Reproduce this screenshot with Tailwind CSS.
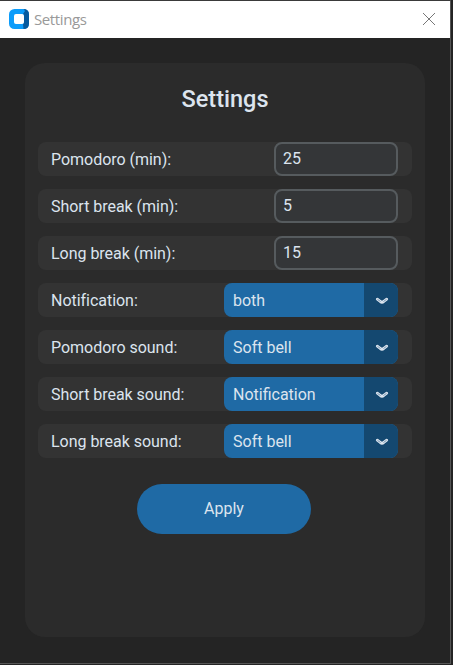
<!DOCTYPE html>
<html lang="en">
<head>
<meta charset="utf-8">
<title>Settings</title>
<script src="https://cdn.jsdelivr.net/npm/@tailwindcss/browser@4"></script>
</head>
<body class="h-[665px] w-[453px] overflow-hidden bg-[#242424] font-[Roboto,sans-serif] text-[16px] text-[#dce4ee]">
<div class="flex h-[664px] w-[451px] flex-col border-t border-r border-b border-t-[#3a3a3a] border-r-[#555] border-b-[#555] bg-[#242424]">
  <header class="flex h-[37px] shrink-0 items-center bg-white pr-[15px] pl-[9px]">
    <svg class="mb-px h-5 w-5" viewBox="0 0 20 20">
      <rect width="20" height="20" rx="5.5" fill="#0c9cfa"/>
      <path d="M14.5 0Q20 0 20 5.5V14.5Q20 20 14.5 20L14 15L15 13V7L14 5L16 2Z" fill="#075a9e"/>
      <rect x="5" y="5" width="10" height="10" rx="2" fill="#fff"/>
    </svg>
    <h1 class="ml-[5px] font-['Open_Sans',sans-serif] text-[15px] tracking-[-0.4px] text-[#999]">Settings</h1>
    <svg class="mb-px ml-auto h-3 w-3" viewBox="0 0 12 12" fill="none" stroke="#777" stroke-width="1"><path d="M0 0L12 12M12 0L0 12"/></svg>
  </header>
  <main class="mt-[25px] ml-[25px] flex h-[574px] w-[400px] flex-col items-center rounded-[20px] bg-[#2b2b2b] px-[13px]">
    <h2 class="mt-[21px] h-[30px] text-[23.5px] leading-[30px] font-medium">Settings</h2>
    <div class="mt-[28px] flex w-full flex-col gap-[13px]">
      <div class="flex h-[34px] items-center justify-between rounded-lg bg-[#333] pr-[14px] pl-[13px]"><span class="pt-[2px] tracking-[-0.03px]">Pomodoro (min):</span><div class="flex h-[34px] w-[124px] items-center rounded-lg border-2 border-[#565b5e] bg-[#343638] pl-[7px]">25</div></div>
      <div class="flex h-[34px] items-center justify-between rounded-lg bg-[#333] pr-[14px] pl-[13px]"><span class="pt-[2px] tracking-[-0.03px]">Short break (min):</span><div class="flex h-[34px] w-[124px] items-center rounded-lg border-2 border-[#565b5e] bg-[#343638] pl-[7px]">5</div></div>
      <div class="flex h-[34px] items-center justify-between rounded-lg bg-[#333] pr-[14px] pl-[13px]"><span class="pt-[2px] tracking-[-0.03px]">Long break (min):</span><div class="flex h-[34px] w-[124px] items-center rounded-lg border-2 border-[#565b5e] bg-[#343638] pl-[7px]">15</div></div>
      <div class="flex h-[34px] items-center justify-between rounded-lg bg-[#333] pr-[14px] pl-[13px]"><span class="pt-[2px] tracking-[-0.03px]">Notification:</span><div class="flex h-[34px] w-[174px] overflow-hidden rounded-lg bg-[#1f6aa5]"><span class="flex w-[140px] items-center pt-[2px] pl-[9px]">both</span><span class="flex w-[34px] items-center justify-center bg-[#144870] pt-px pl-[2px]"><svg class="h-3 w-4" viewBox="0 0 16 12" fill="none" stroke="#dce4ee" stroke-linecap="round" stroke-linejoin="round"><path stroke-width="2.8" d="M3.3 4.2L6.2 6.4Q8 8 9.8 6.4L12.7 4.2"/><path stroke="#5d83a3" stroke-width=".8" d="M3.8 4.6L6.2 6.3M9.8 6.3L12.2 4.6"/></svg></span></div></div>
      <div class="flex h-[34px] items-center justify-between rounded-lg bg-[#333] pr-[14px] pl-[13px]"><span class="pt-[2px] tracking-[-0.03px]">Pomodoro sound:</span><div class="flex h-[34px] w-[174px] overflow-hidden rounded-lg bg-[#1f6aa5]"><span class="flex w-[140px] items-center pt-[2px] pl-[9px]">Soft bell</span><span class="flex w-[34px] items-center justify-center bg-[#144870] pt-px pl-[2px]"><svg class="h-3 w-4" viewBox="0 0 16 12" fill="none" stroke="#dce4ee" stroke-linecap="round" stroke-linejoin="round"><path stroke-width="2.8" d="M3.3 4.2L6.2 6.4Q8 8 9.8 6.4L12.7 4.2"/><path stroke="#5d83a3" stroke-width=".8" d="M3.8 4.6L6.2 6.3M9.8 6.3L12.2 4.6"/></svg></span></div></div>
      <div class="flex h-[34px] items-center justify-between rounded-lg bg-[#333] pr-[14px] pl-[13px]"><span class="pt-[2px] tracking-[-0.03px]">Short break sound:</span><div class="flex h-[34px] w-[174px] overflow-hidden rounded-lg bg-[#1f6aa5]"><span class="flex w-[140px] items-center pt-[2px] pl-[9px]">Notification</span><span class="flex w-[34px] items-center justify-center bg-[#144870] pt-px pl-[2px]"><svg class="h-3 w-4" viewBox="0 0 16 12" fill="none" stroke="#dce4ee" stroke-linecap="round" stroke-linejoin="round"><path stroke-width="2.8" d="M3.3 4.2L6.2 6.4Q8 8 9.8 6.4L12.7 4.2"/><path stroke="#5d83a3" stroke-width=".8" d="M3.8 4.6L6.2 6.3M9.8 6.3L12.2 4.6"/></svg></span></div></div>
      <div class="flex h-[34px] items-center justify-between rounded-lg bg-[#333] pr-[14px] pl-[13px]"><span class="pt-[2px] tracking-[-0.03px]">Long break sound:</span><div class="flex h-[34px] w-[174px] overflow-hidden rounded-lg bg-[#1f6aa5]"><span class="flex w-[140px] items-center pt-[2px] pl-[9px]">Soft bell</span><span class="flex w-[34px] items-center justify-center bg-[#144870] pt-px pl-[2px]"><svg class="h-3 w-4" viewBox="0 0 16 12" fill="none" stroke="#dce4ee" stroke-linecap="round" stroke-linejoin="round"><path stroke-width="2.8" d="M3.3 4.2L6.2 6.4Q8 8 9.8 6.4L12.7 4.2"/><path stroke="#5d83a3" stroke-width=".8" d="M3.8 4.6L6.2 6.3M9.8 6.3L12.2 4.6"/></svg></span></div></div>
    </div>
    <button class="mt-[26px] mr-[2px] h-[50px] w-[174px] rounded-full bg-[#1f6aa5]">Apply</button>
  </main>
</div>
</body>
</html>
